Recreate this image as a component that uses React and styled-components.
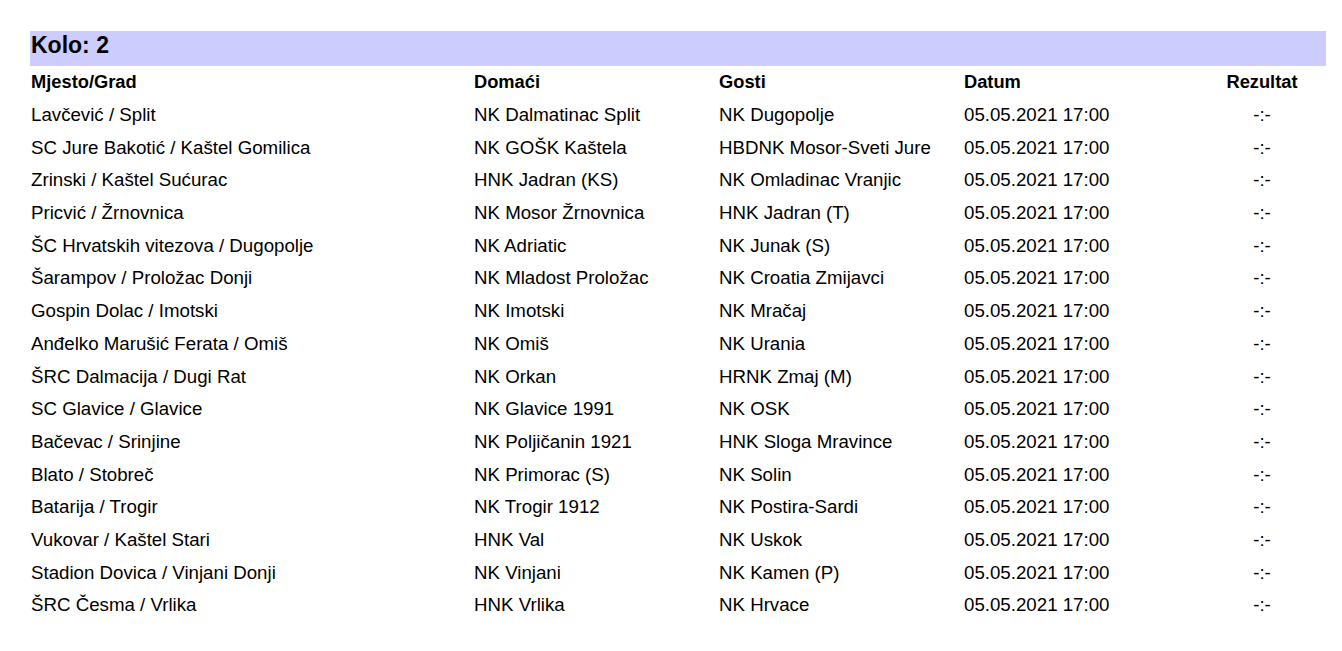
import React from 'react';
import styled, { createGlobalStyle } from 'styled-components';

const matches = [
  ['Lavčević / Split', 'NK Dalmatinac Split', 'NK Dugopolje'],
  ['SC Jure Bakotić / Kaštel Gomilica', 'NK GOŠK Kaštela', 'HBDNK Mosor-Sveti Jure'],
  ['Zrinski / Kaštel Sućurac', 'HNK Jadran (KS)', 'NK Omladinac Vranjic'],
  ['Pricvić / Žrnovnica', 'NK Mosor Žrnovnica', 'HNK Jadran (T)'],
  ['ŠC Hrvatskih vitezova / Dugopolje', 'NK Adriatic', 'NK Junak (S)'],
  ['Šarampov / Proložac Donji', 'NK Mladost Proložac', 'NK Croatia Zmijavci'],
  ['Gospin Dolac / Imotski', 'NK Imotski', 'NK Mračaj'],
  ['Anđelko Marušić Ferata / Omiš', 'NK Omiš', 'NK Urania'],
  ['ŠRC Dalmacija / Dugi Rat', 'NK Orkan', 'HRNK Zmaj (M)'],
  ['SC Glavice / Glavice', 'NK Glavice 1991', 'NK OSK'],
  ['Bačevac / Srinjine', 'NK Poljičanin 1921', 'HNK Sloga Mravince'],
  ['Blato / Stobreč', 'NK Primorac (S)', 'NK Solin'],
  ['Batarija / Trogir', 'NK Trogir 1912', 'NK Postira-Sardi'],
  ['Vukovar / Kaštel Stari', 'HNK Val', 'NK Uskok'],
  ['Stadion Dovica / Vinjani Donji', 'NK Vinjani', 'NK Kamen (P)'],
  ['ŠRC Česma / Vrlika', 'HNK Vrlika', 'NK Hrvace'],
];

const GlobalStyle = createGlobalStyle`
  body {
    margin: 0;
    background: #ffffff;
    color: #000000;
    font-family: "Liberation Sans", Arial, sans-serif;
  }
`;

const Page = styled.div`
  padding: 31px 16px 0 30px;
`;

const RoundBar = styled.div`
  height: 35px;
  box-sizing: border-box;
  padding: 1px 0 0 1px;
  background: #ccccff;
  font-size: 23px;
  font-weight: bold;
  line-height: 26px;
`;

const Table = styled.div`
  display: grid;
  grid-template-columns: 443px 245px 245px 245px 106px;
  grid-auto-rows: 32.7px;
  padding-left: 1px;
  font-size: 18.7px;
`;

const Cell = styled.div`
  display: flex;
  align-items: center;
  white-space: nowrap;
  font-weight: ${({ head }) => (head ? 'bold' : 'normal')};
  font-size: ${({ head }) => (head ? '18.3px' : '18.7px')};
  justify-content: ${({ center }) => (center ? 'center' : 'flex-start')};
`;

const App = () => (
  <Page>
    <GlobalStyle />
    <RoundBar>Kolo: 2</RoundBar>
    <Table>
      <Cell head>Mjesto/Grad</Cell>
      <Cell head>Domaći</Cell>
      <Cell head>Gosti</Cell>
      <Cell head>Datum</Cell>
      <Cell head center>Rezultat</Cell>
      {matches.map(([venue, home, away]) => (
        <React.Fragment key={venue}>
          <Cell>{venue}</Cell>
          <Cell>{home}</Cell>
          <Cell>{away}</Cell>
          <Cell>05.05.2021 17:00</Cell>
          <Cell center>-:-</Cell>
        </React.Fragment>
      ))}
    </Table>
  </Page>
);

export default App;
